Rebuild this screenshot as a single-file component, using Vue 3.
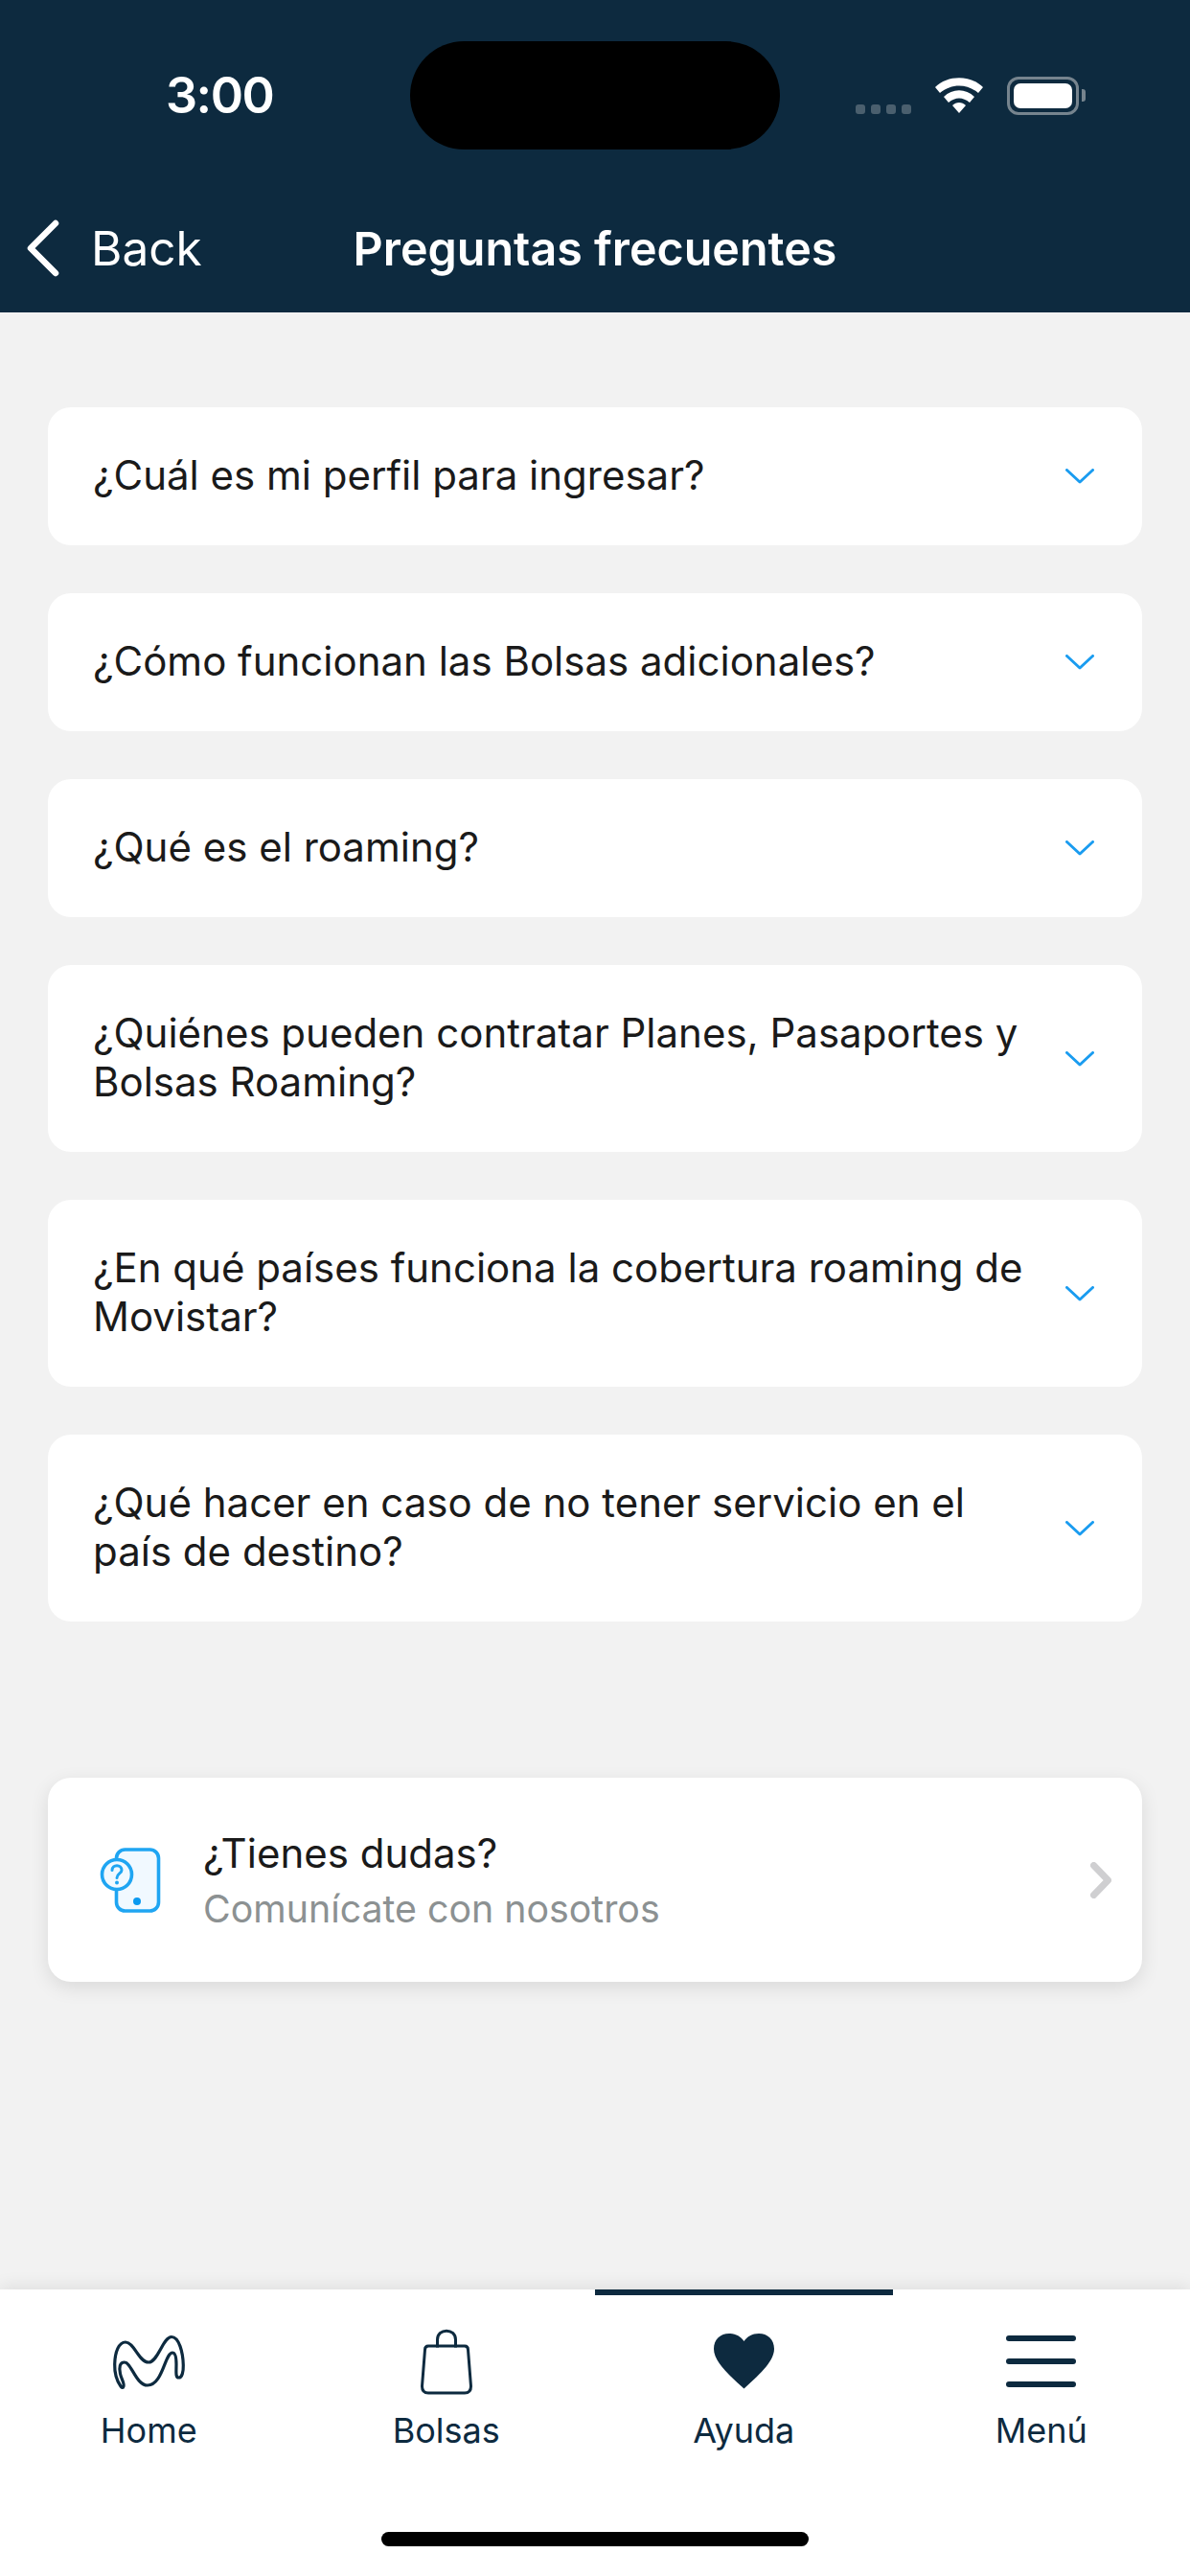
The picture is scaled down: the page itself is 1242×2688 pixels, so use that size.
<script setup>
const preguntas = [
  '¿Cuál es mi perfil para ingresar?',
  '¿Cómo funcionan las Bolsas adicionales?',
  '¿Qué es el roaming?',
  '¿Quiénes pueden contratar Planes, Pasaportes y Bolsas Roaming?',
  '¿En qué países funciona la cobertura roaming de Movistar?',
  '¿Qué hacer en caso de no tener servicio en el país de destino?',
]

const tabs = [
  { id: 'home', label: 'Home' },
  { id: 'bolsas', label: 'Bolsas' },
  { id: 'ayuda', label: 'Ayuda', active: true },
  { id: 'menu', label: 'Menú' },
]
</script>

<template>
  <div class="page">
    <header class="header">
      <div class="status">
        <span class="time">3:00</span>
        <div class="island"></div>
        <div class="status-icons">
          <div class="signal"><i></i><i></i><i></i><i></i></div>
          <svg class="wifi" width="52" height="38" viewBox="0 0 52 38">
            <path d="M1 11 C14 -2 38 -2 51 11 L46 17 C34 7 18 7 6 17 Z" fill="#fff" />
            <path d="M10 21 C19 12 33 12 42 21 L37 27 C30 21 22 21 15 27 Z" fill="#fff" />
            <path d="M19 30 C23 26 29 26 33 30 L26 38 Z" fill="#fff" />
          </svg>
          <div class="battery"><div class="battery-fill"></div></div>
          <div class="battery-nub"></div>
        </div>
      </div>
      <nav class="nav">
        <div class="back">
          <svg width="36" height="60" viewBox="0 0 36 60">
            <path d="M31 4 L5 30 L31 56" fill="none" stroke="#fff" stroke-width="6.5" stroke-linecap="round" stroke-linejoin="round" />
          </svg>
          <span>Back</span>
        </div>
        <h1 class="title">Preguntas frecuentes</h1>
      </nav>
    </header>

    <main class="content">
      <div class="faq">
        <div v-for="p in preguntas" :key="p" class="faq-row">
          <span class="faq-text">{{ p }}</span>
          <svg class="faq-chevron" width="30" height="16" viewBox="0 0 30 16">
            <path d="M1.5 1.5 L15 14 L28.5 1.5" fill="none" stroke="#1a9cf0" stroke-width="3" stroke-linecap="round" stroke-linejoin="round" />
          </svg>
        </div>
      </div>

      <div class="contact">
        <svg class="contact-icon" width="66" height="70" viewBox="0 0 66 70">
          <rect x="17.5" y="3" width="44" height="64" rx="9" fill="#f1f9ff" stroke="#1fa5f2" stroke-width="3.6" />
          <circle cx="18" cy="29" r="15.5" fill="#f1f9ff" stroke="#1fa5f2" stroke-width="3.6" />
          <path d="M13 24.5 C13 18 23 18 23 24.5 C23 28 18 28 18 32.5" fill="none" stroke="#1fa5f2" stroke-width="3" stroke-linecap="round" />
          <circle cx="18" cy="37.5" r="2" fill="#1fa5f2" />
          <circle cx="39" cy="57" r="4" fill="#0b9af0" />
        </svg>
        <div class="contact-text">
          <span class="contact-title">¿Tienes dudas?</span>
          <span class="contact-sub">Comunícate con nosotros</span>
        </div>
        <svg width="22" height="38" viewBox="0 0 22 38">
          <path d="M3.5 3.5 L18.5 19 L3.5 34.5" fill="none" stroke="#cfcfd1" stroke-width="7" stroke-linecap="round" stroke-linejoin="round" />
        </svg>
      </div>
    </main>

    <footer class="tabbar">
      <div class="tabs">
        <div v-for="t in tabs" :key="t.id" class="tab" :class="{ active: t.active }">
          <div class="tab-icon">
            <svg v-if="t.id === 'home'" width="79" height="59" viewBox="-2 -2 79 59">
              <path d="M8 53 C3 46 1.5 38 1.7 30 C2 17 6 7 13 7 C22 7 27 28 37 28 C47 28 52 1.5 61 1.5 C69 1.5 73 18 73.3 31 C73.5 38 72 44 68.5 44 C65 44 66 38 66 30 C66 24 65 18 62 18 C54 18 52 52 36 52 C24 52 19 28 12 28 C7 28 6 33 7.5 40 C8.5 45 12 50 11 53 C10.5 55 9 54.5 8 53 Z" fill="none" stroke="#0d2a3f" stroke-width="3.2" stroke-linejoin="round" />
            </svg>
            <svg v-else-if="t.id === 'bolsas'" width="54" height="70" viewBox="0 0 54 70">
              <path d="M8 19 H46 C48 19 49.5 20.5 49.5 23 L52.5 61 C52.5 65.5 50 68 46 68 H8 C4 68 1.5 65.5 1.5 61 L4.5 23 C4.5 20.5 6 19 8 19 Z" fill="none" stroke="#0d2a3f" stroke-width="3" stroke-linejoin="round" />
              <path d="M17.5 19 V11 C17.5 -1.5 36.5 -1.5 36.5 11 V19" transform="translate(0 1.5)" fill="none" stroke="#0d2a3f" stroke-width="3" />
            </svg>
            <svg v-else-if="t.id === 'ayuda'" width="63" height="58" viewBox="0 0 63 58">
              <path d="M31.5 57.5 C18 45 0 30 0 16 C0 6 7 0 16 0 C23 0 28 3 31.5 8 C35 3 40 0 47 0 C56 0 63 6 63 16 C63 30 45 45 31.5 57.5 Z" fill="#0d2a3f" />
            </svg>
            <div v-else class="burger"><i></i><i></i><i></i></div>
          </div>
          <span class="tab-label">{{ t.label }}</span>
        </div>
      </div>
      <div class="home-bar"></div>
    </footer>
  </div>
</template>

<style>
html, body {
  margin: 0;
  background: #f2f2f2;
}
</style>

<style scoped>
.page {
  width: 1242px;
  height: 2688px;
  display: flex;
  flex-direction: column;
  background: #f2f2f2;
  font-family: Inter, "Liberation Sans", sans-serif;
  overflow: hidden;
}

.header {
  height: 326px;
  flex-shrink: 0;
  background: #0d2a3f;
  color: #fff;
  box-sizing: border-box;
  position: relative;
}

.status {
  height: 200px;
  display: flex;
  justify-content: space-between;
  align-items: flex-start;
  padding: 72px 109px 0 173px;
  box-sizing: border-box;
}

.time {
  font-size: 52px;
  line-height: 56px;
  font-weight: 600;
  letter-spacing: -1.5px;
}

.island {
  position: absolute;
  left: 428px;
  top: 43px;
  width: 386px;
  height: 113px;
  border-radius: 57px;
  background: #000;
}

.status-icons {
  display: flex;
  align-items: flex-start;
  padding-top: 8px;
}

.signal {
  display: flex;
  gap: 6px;
  margin-top: 29px;
  margin-right: 24px;
}

.signal i {
  width: 10px;
  height: 10px;
  border-radius: 3px;
  background: #4a5f6e;
}

.wifi {
  margin-right: 24px;
}

.battery {
  width: 75px;
  height: 40px;
  box-sizing: border-box;
  border: 3px solid #76848e;
  border-radius: 12px;
  padding: 4px;
}

.battery-fill {
  width: 100%;
  height: 100%;
  background: #fff;
  border-radius: 7px;
}

.battery-nub {
  width: 4px;
  height: 13px;
  margin-top: 13px;
  margin-left: 3px;
  border-radius: 0 3px 3px 0;
  background: #76848e;
}

.nav {
  height: 126px;
  position: relative;
  display: flex;
  justify-content: center;
}

.back {
  position: absolute;
  left: 27px;
  top: 28px;
  display: flex;
  align-items: center;
  gap: 32px;
  font-size: 49.5px;
  line-height: 62px;
}

.title {
  margin: 0;
  padding-top: 32px;
  font-size: 48.4px;
  line-height: 56px;
  font-weight: 600;
}

.content {
  flex: 1;
  padding: 99px 50px 0;
}

.faq {
  display: flex;
  flex-direction: column;
  gap: 50px;
}

.faq-row {
  min-height: 144px;
  box-sizing: border-box;
  display: flex;
  align-items: center;
  justify-content: space-between;
  gap: 30px;
  padding: 45px 50px 48px 47px;
  background: #fff;
  border-radius: 24px;
}

.faq-text {
  font-size: 42px;
  line-height: 51px;
  color: #1a1a1a;
}

.faq-chevron {
  flex-shrink: 0;
  margin-top: 3px;
}

.contact {
  margin-top: 163px;
  height: 213px;
  box-sizing: border-box;
  display: flex;
  align-items: center;
  padding: 0 32px 0 54px;
  background: #fff;
  border-radius: 24px;
  box-shadow: 0 6px 20px rgba(0, 0, 0, 0.1);
}

.contact-icon {
  flex-shrink: 0;
}

.contact-text {
  flex: 1;
  display: flex;
  flex-direction: column;
  gap: 10px;
  margin-left: 42px;
}

.contact-title {
  font-size: 42px;
  line-height: 50px;
  color: #1a1a1a;
}

.contact-sub {
  font-size: 39.3px;
  line-height: 46px;
  color: #8c9192;
}

.tabbar {
  height: 299px;
  flex-shrink: 0;
  display: flex;
  flex-direction: column;
  background: #fff;
  box-shadow: 0 -4px 16px rgba(0, 0, 0, 0.08);
  position: relative;
}

.tabs {
  display: grid;
  grid-template-columns: repeat(4, 1fr);
}

.tab {
  height: 259px;
  box-sizing: border-box;
  display: flex;
  flex-direction: column;
  align-items: center;
  padding-top: 40px;
  border-top: 6px solid transparent;
  margin-bottom: -6px;
  color: #0d2a3f;
}

.tab.active {
  border-top-color: #0d2a3f;
}

.tab-icon {
  height: 70px;
  margin-top: -6px;
  display: flex;
  align-items: center;
  justify-content: center;
}

.tab-label {
  margin-top: 16px;
  font-size: 36px;
  line-height: 42px;
}

.burger {
  width: 73px;
  display: flex;
  flex-direction: column;
  gap: 18px;
}

.burger i {
  height: 6px;
  border-radius: 3px;
  background: #0d2a3f;
}

.home-bar {
  width: 446px;
  height: 15px;
  margin: 0 auto;
  border-radius: 8px;
  background: #000;
}
</style>
